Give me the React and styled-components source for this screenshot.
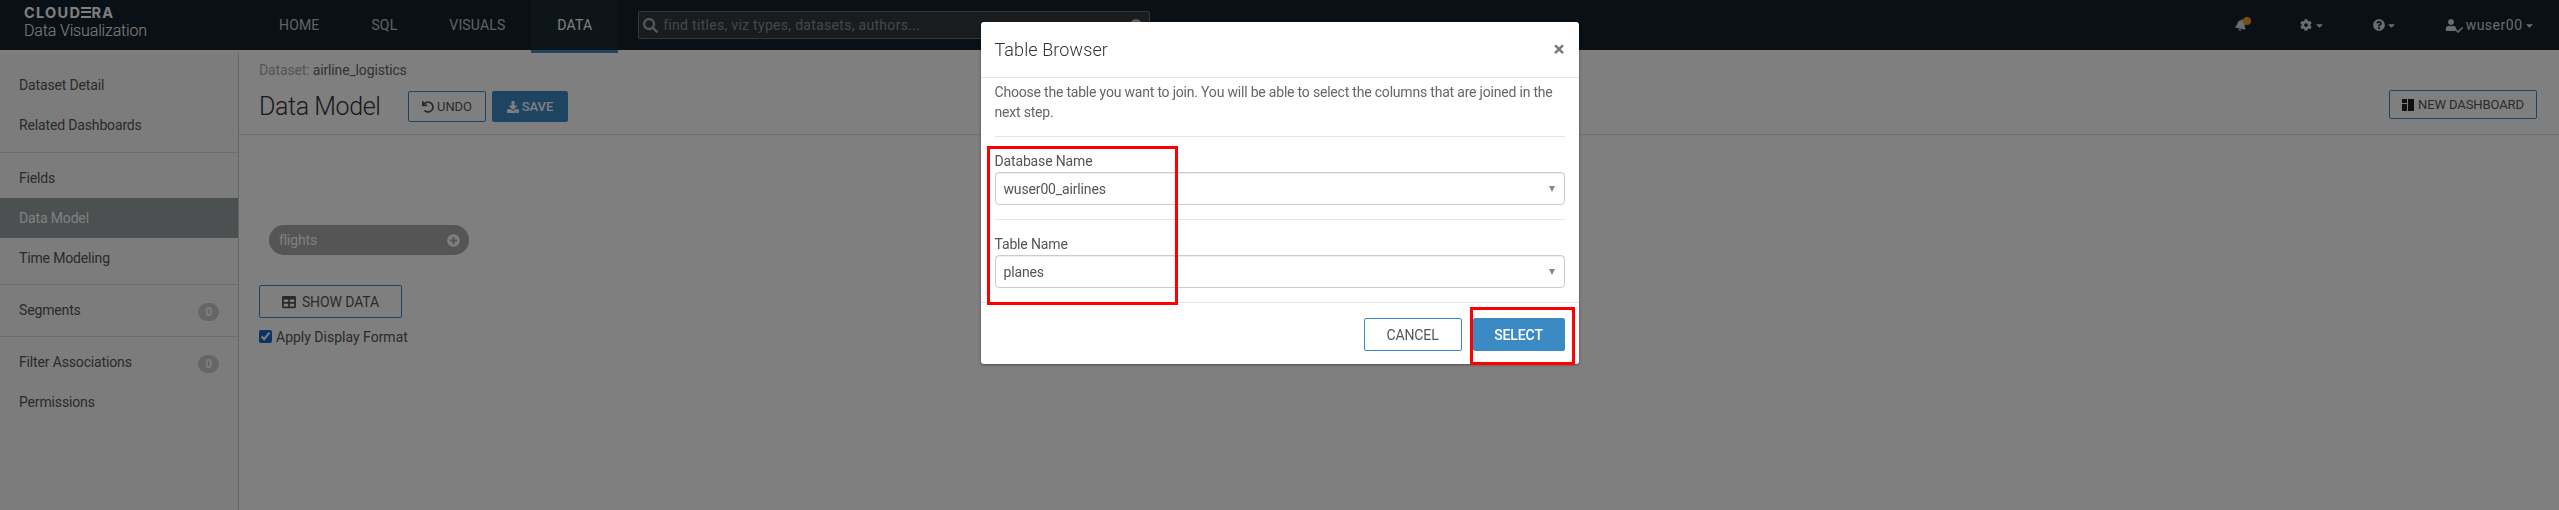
import styled, { createGlobalStyle } from 'styled-components'
import {
  FaBell, FaCaretDown, FaCheck, FaCog, FaDownload, FaPlusCircle,
  FaQuestionCircle, FaSearch, FaTable, FaUndo, FaUser,
} from 'react-icons/fa'

const GlobalStyle = createGlobalStyle`
  html, body {
    margin: 0;
    height: 100%;
    overflow: hidden;
  }
  body {
    font-family: 'Roboto', 'Liberation Sans', sans-serif;
    font-size: 14px;
    letter-spacing: -0.15px;
    color: #555;
    background: #fff;
  }
  * { box-sizing: border-box; }
`

const Page = styled.div`
  display: flex;
  flex-direction: column;
  height: 100vh;
`

const NavBar = styled.header`
  display: flex;
  align-items: stretch;
  flex: 0 0 50px;
  height: 50px;
  background: #14222c;
`

const Brand = styled.div`
  width: 253px;
  padding: 5px 0 0 24px;
  color: #fff;
`

const BrandName = styled.div`
  font-family: 'Inter', 'Roboto', sans-serif;
  font-weight: 700;
  font-size: 14.5px;
  line-height: 16px;
  letter-spacing: 1.3px;
`

const BrandBarE = styled.span`
  color: transparent;
  background: linear-gradient(#fff 0 2px, transparent 2px 4.5px, #fff 4.5px 6.5px, transparent 6.5px 9px, #fff 9px 11px) no-repeat 0 3px / 100% 11px;
`

const BrandSub = styled.div`
  font-weight: 300;
  font-size: 16px;
  line-height: 20px;
`

const NavTab = styled.a`
  display: flex;
  align-items: center;
  padding: 0 26px;
  height: ${p => (p.$active ? '53px' : '50px')};
  font-size: 14px;
  letter-spacing: 0.15px;
  color: ${p => (p.$active ? '#fff' : '#bfc5c9')};
  background: ${p => (p.$active ? '#1d2a33' : 'transparent')};
  border-bottom: ${p => (p.$active ? '3px solid #3b8ac4' : '0')};
  position: relative;
`

const SearchBox = styled.div`
  display: flex;
  align-items: center;
  gap: 5px;
  width: 512px;
  height: 28px;
  margin: 11px 0 0 20px;
  padding: 0 7px 0 4px;
  background: #33383c;
  border: 1px solid #6b7074;
  border-radius: 2px;
  color: #8b9094;
  position: relative;
  svg { color: #a7abae; font-size: 15px; flex: none; }
`

const SearchText = styled.span`
  flex: 1;
  font-size: 14px;
  letter-spacing: 0.3px;
`

const SearchClear = styled.span`
  width: 12px;
  height: 12px;
  border-radius: 50%;
  background: #bbb;
`

const NavRight = styled.div`
  margin-left: auto;
  display: flex;
  align-items: center;
  color: #d4d8da;
  padding-right: 24px;
`

const NavIcon = styled.span`
  display: flex;
  align-items: center;
  gap: 3px;
  margin-left: ${p => p.$gap}px;
  font-size: 12px;
  position: relative;
`

const Bell = styled(FaBell)`
  transform: rotate(12deg);
`

const Caret = styled(FaCaretDown)`
  font-size: 11px;
  margin-left: -1.5px;
`

const BellDot = styled.span`
  position: absolute;
  top: -2px;
  right: -4px;
  width: 8px;
  height: 8px;
  border-radius: 50%;
  background: #f39c1f;
`

const UserCheck = styled(FaCheck)`
  font-size: 8px;
  margin: 10px 0 0 -5px;
`

const UserName = styled.span`
  letter-spacing: 0.5px;
  font-size: 14px;
`

const Content = styled.div`
  display: flex;
  flex: 1;
  margin-top: 3px;
  min-height: 0;
`

const Sidebar = styled.nav`
  flex: 0 0 239px;
  padding-top: 12px;
  background: #f9f9f9;
  border-right: 1px solid #c8c8c8;
`

const SideGroup = styled.div`
  padding: 5px 0 6px;
  border-bottom: ${p => (p.$last ? '0' : '1px solid #ddd')};
  &:first-child { padding-top: 0; padding-bottom: 7px; }
`

const SideItem = styled.a`
  display: flex;
  align-items: center;
  justify-content: space-between;
  height: 40px;
  padding: 0 19px 0 19px;
  font-size: 14px;
  color: ${p => (p.$active ? '#fff' : '#555')};
  background: ${p => (p.$active ? '#9aa0a3' : 'transparent')};
`

const Badge = styled.span`
  display: flex;
  align-items: center;
  justify-content: center;
  width: 21px;
  height: 18px;
  margin-top: 3px;
  border-radius: 9px;
  font-size: 12px;
  font-weight: 700;
  color: #fff;
  background: #ccc;
`

const Main = styled.main`
  flex: 1;
  min-width: 0;
  background: #fff;
`

const MainHeader = styled.div`
  display: flex;
  justify-content: space-between;
  height: 82px;
  padding: 8px 22px 0 20px;
  border-bottom: 1px solid #ddd;
`

const Crumb = styled.div`
  font-size: 14px;
  line-height: 18px;
  color: #aaa;
  span { color: #666; }
`

const TitleRow = styled.div`
  display: flex;
  align-items: center;
  gap: 6px;
  margin-top: 12px;
`

const Title = styled.h1`
  margin: 0 22px 0 0;
  width: 121px;
  font-weight: 300;
  font-size: 25px;
  letter-spacing: -0.4px;
  line-height: 31px;
  white-space: nowrap;
  color: #333;
`

const Button = styled.button`
  display: inline-flex;
  align-items: center;
  justify-content: center;
  gap: ${p => p.$gap || 3}px;
  width: ${p => p.$w}px;
  height: ${p => p.$h || 31}px;
  padding: 0;
  font-family: inherit;
  font-size: ${p => p.$size || 13}px;
  font-weight: ${p => (p.$primary ? 500 : 400)};
  letter-spacing: -0.1px;
  color: ${p => (p.$primary ? '#fff' : '#555')};
  background: ${p => (p.$primary ? '#3b8ac4' : '#fff')};
  border: 1px solid #3b8ac4;
  border-radius: 2px;
  svg { font-size: ${p => p.$icon || 12}px; }
`

const DashIcon = styled.svg`
  width: 12px;
  height: 12px;
  fill: #222;
`

const TopButton = styled(Button)`
  margin-top: 29px;
`

const Canvas = styled.div`
  padding: 90px 20px 0;
`

const Pill = styled.div`
  display: flex;
  align-items: center;
  justify-content: space-between;
  width: 200px;
  height: 30px;
  margin-left: 10px;
  padding: 0 9px 0 10px;
  border-radius: 15px;
  background: #aaa;
  color: #fff;
  font-size: 14px;
  svg { font-size: 13px; }
`

const ShowData = styled(Button)`
  margin-top: 30px;
`

const CheckRow = styled.label`
  display: flex;
  align-items: center;
  gap: 4px;
  margin-top: 10px;
  height: 17px;
  color: #555;
  font-size: 14px;
  letter-spacing: 0;
`

const CheckInput = styled.input`
  width: 13px;
  height: 13px;
  margin: 0;
  accent-color: #1a66c9;
`

const Backdrop = styled.div`
  position: fixed;
  inset: 0;
  display: flex;
  justify-content: center;
  align-items: flex-start;
  padding-top: 22px;
  background: rgba(0, 0, 0, 0.5);
`

const Modal = styled.section`
  width: 598px;
  background: #fff;
  border-radius: 3px;
  box-shadow: 0 1px 3px rgba(0, 0, 0, 0.4);
  position: relative;
`

const ModalHeader = styled.div`
  display: flex;
  align-items: center;
  justify-content: space-between;
  height: 56px;
  padding: 0 14px;
  border-bottom: 1px solid #e5e5e5;
`

const ModalTitle = styled.h4`
  margin: 0;
  font-weight: 300;
  font-size: 18px;
  letter-spacing: 0.1px;
  color: #333;
`

const Close = styled.span`
  font-size: 21px;
  font-weight: 700;
  line-height: 1;
  color: #777;
`

const ModalBody = styled.div`
  padding: 4px 14px 14px;
`

const Intro = styled.p`
  margin: 0;
  padding-bottom: 14px;
  line-height: 20px;
  letter-spacing: -0.2px;
  color: #666;
`

const Field = styled.div`
  padding-top: 14px;
  border-top: 1px solid #e5e5e5;
  & + & { margin-top: 14px; }
`

const FieldLabel = styled.div`
  line-height: 20px;
  color: #555;
  margin-bottom: 1px;
`

const Select = styled.div`
  display: flex;
  align-items: center;
  justify-content: space-between;
  height: 33px;
  padding: 0 9px 0 8px;
  border: 1px solid #ccc;
  border-radius: 4px;
  box-shadow: inset 0 1px 1px rgba(0, 0, 0, 0.075);
  color: #555;
`

const SelectArrow = styled.span`
  width: 0;
  height: 0;
  border-left: 3.5px solid transparent;
  border-right: 3.5px solid transparent;
  border-top: 6px solid #888;
`

const ModalFooter = styled.div`
  display: flex;
  justify-content: flex-end;
  gap: 11px;
  height: 62px;
  padding: 15px 14px 0;
  border-top: 1px solid #e5e5e5;
`

/* red annotation boxes sit on top of the dialog */
const Callout = styled.div`
  position: absolute;
  left: ${p => p.$x}px;
  top: ${p => p.$y}px;
  width: ${p => p.$w}px;
  height: ${p => p.$h}px;
  border: 3px solid #ff0000;
  pointer-events: none;
`

const links = [
  ['Dataset Detail', 'Related Dashboards'],
  ['Fields', 'Data Model', 'Time Modeling'],
  ['Segments'],
  ['Filter Associations', 'Permissions'],
]
const badged = ['Segments', 'Filter Associations']

export default function App() {
  return (
    <Page>
      <GlobalStyle />
      <NavBar>
        <Brand>
          <BrandName>CLOUD<BrandBarE>E</BrandBarE>RA</BrandName>
          <BrandSub>Data Visualization</BrandSub>
        </Brand>
        <NavTab>HOME</NavTab>
        <NavTab>SQL</NavTab>
        <NavTab>VISUALS</NavTab>
        <NavTab $active>DATA</NavTab>
        <SearchBox>
          <FaSearch />
          <SearchText>find titles, viz types, datasets, authors...</SearchText>
          <SearchClear />
        </SearchBox>
        <NavRight>
          <NavIcon $gap={0}><Bell /><BellDot /></NavIcon>
          <NavIcon $gap={53}><FaCog /><Caret /></NavIcon>
          <NavIcon $gap={48}><FaQuestionCircle /><Caret /></NavIcon>
          <NavIcon $gap={47.5}>
            <FaUser />
            <UserCheck />
            <UserName>wuser00</UserName>
            <Caret />
          </NavIcon>
        </NavRight>
      </NavBar>

      <Content>
        <Sidebar>
          {links.map((group, i) => (
            <SideGroup key={i} $last={i === links.length - 1}>
              {group.map(name => (
                <SideItem key={name} $active={name === 'Data Model'}>
                  {name}
                  {badged.includes(name) && <Badge>0</Badge>}
                </SideItem>
              ))}
            </SideGroup>
          ))}
        </Sidebar>
        <Main>
          <MainHeader>
            <div>
              <Crumb>Dataset: <span>airline_logistics</span></Crumb>
              <TitleRow>
                <Title>Data Model</Title>
                <Button $w={78}><FaUndo />UNDO</Button>
                <Button $w={76} $primary><FaDownload />SAVE</Button>
              </TitleRow>
            </div>
            <TopButton $w={148} $h={29} $gap={4}>
              <DashIcon viewBox="0 0 12 12">
                <path d="M0 0h5v4H0zM0 5h5v7H0zM6 0h6v12H6z" />
              </DashIcon>
              NEW DASHBOARD
            </TopButton>
          </MainHeader>
          <Canvas>
            <Pill>flights<FaPlusCircle /></Pill>
            <ShowData $w={143} $h={33} $size={14} $gap={6} $icon={14}><FaTable />SHOW DATA</ShowData>
            <CheckRow>
              <CheckInput type="checkbox" defaultChecked readOnly />
              Apply Display Format
            </CheckRow>
          </Canvas>
        </Main>
      </Content>

      <Backdrop>
        <Modal>
          <ModalHeader>
            <ModalTitle>Table Browser</ModalTitle>
            <Close>×</Close>
          </ModalHeader>
          <ModalBody>
            <Intro>Choose the table you want to join. You will be able to select the columns that are joined in the next step.</Intro>
            <Field>
              <FieldLabel>Database Name</FieldLabel>
              <Select>wuser00_airlines<SelectArrow /></Select>
            </Field>
            <Field>
              <FieldLabel>Table Name</FieldLabel>
              <Select>planes<SelectArrow /></Select>
            </Field>
          </ModalBody>
          <ModalFooter>
            <Button $w={98} $h={33} $size={14}>CANCEL</Button>
            <Button $w={92} $h={33} $size={14} $primary>SELECT</Button>
          </ModalFooter>
          <Callout $x={6} $y={124} $w={191} $h={159} />
          <Callout $x={489} $y={285} $w={105} $h={58} />
        </Modal>
      </Backdrop>
    </Page>
  )
}
